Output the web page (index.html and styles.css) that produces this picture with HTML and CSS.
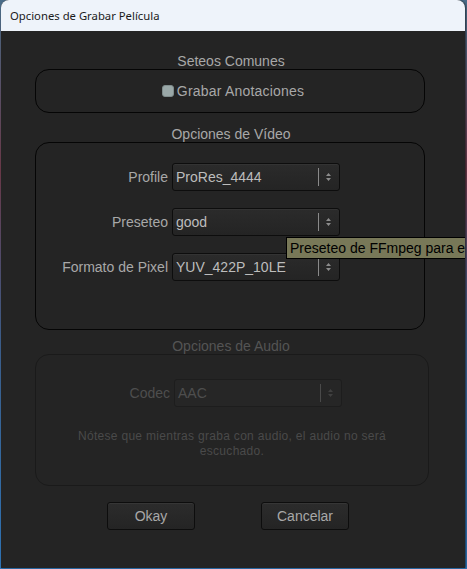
FILE: index.html
```html
<!DOCTYPE html>
<html>
<head>
<meta charset="utf-8">
<link rel="stylesheet" href="styles.css">
</head>
<body>
<div class="window">
  <div class="titlebar">Opciones de Grabar Película</div>
  <div class="content">
    <div class="group-title">Seteos Comunes</div>
    <div class="group g1">
      <label class="check"><span class="box"></span>Grabar Anotaciones</label>
    </div>

    <div class="group-title">Opciones de Vídeo</div>
    <div class="group g2">
      <div class="row">
        <span class="label">Profile</span>
        <div class="combo"><span class="val">ProRes_4444</span><span class="sep"></span><svg class="arrows" width="7" height="10" viewBox="0 0 7 10"><path d="M3.5 1 L6 4 H1 Z M3.5 9 L6 6 H1 Z" fill="currentColor"/></svg></div>
      </div>
      <div class="row">
        <span class="label">Preseteo</span>
        <div class="combo"><span class="val">good</span><span class="sep"></span><svg class="arrows" width="7" height="10" viewBox="0 0 7 10"><path d="M3.5 1 L6 4 H1 Z M3.5 9 L6 6 H1 Z" fill="currentColor"/></svg></div>
      </div>
      <div class="row">
        <span class="label">Formato de Pixel</span>
        <div class="combo"><span class="val">YUV_422P_10LE</span><span class="sep"></span><svg class="arrows" width="7" height="10" viewBox="0 0 7 10"><path d="M3.5 1 L6 4 H1 Z M3.5 9 L6 6 H1 Z" fill="currentColor"/></svg></div>
      </div>
    </div>

    <div class="group-title disabled">Opciones de Audio</div>
    <div class="group g3 disabled">
      <div class="row">
        <span class="label">Codec</span>
        <div class="combo"><span class="val">AAC</span><span class="sep"></span><svg class="arrows" width="7" height="10" viewBox="0 0 7 10"><path d="M3.5 1 L6 4 H1 Z M3.5 9 L6 6 H1 Z" fill="currentColor"/></svg></div>
      </div>
      <p class="note">Nótese que mientras graba con audio, el audio no será<br>escuchado.</p>
    </div>

    <div class="buttons">
      <button class="btn">Okay</button>
      <button class="btn">Cancelar</button>
    </div>

    <div class="tooltip">Preseteo de FFmpeg para e</div>
  </div>
</div>
</body>
</html>
```
FILE: styles.css
```css
html, body {
  margin: 0;
  padding: 0;
  width: 467px;
  height: 569px;
  overflow: hidden;
  background: linear-gradient(180deg, #4a6d8a 0%, #6b3a4a 30%, #3d5f8c 60%, #2f76b8 100%);
}
.window {
  margin-left: 1px;
  width: 464px;
  height: 568px;
  background: #242424;
  border-radius: 8px 8px 0 0;
  overflow: hidden;
  box-shadow: 1px 0 2px rgba(0,0,0,0.5);
  display: flex;
  flex-direction: column;
}
.titlebar {
  height: 31px;
  flex: none;
  background: #eef3fa;
  color: #1a1a1a;
  font-family: "Noto Sans", "Open Sans", sans-serif;
  font-size: 11.3px;
  line-height: 31px;
  padding-left: 9px;
  box-sizing: border-box;
}
.content {
  position: relative;
  flex: 1;
  padding: 22px 0 0 34px;
  font-family: "Liberation Sans", Arial, sans-serif;
  font-size: 14px;
  color: #a8a8a8;
}
.group-title {
  width: 392px;
  text-align: center;
  line-height: 16px;
  height: 16px;
}
.group-title.disabled { color: #545454; }
.group {
  box-sizing: border-box;
  border: 1px solid #050505;
  border-radius: 14px;
  width: 390px;
}
.g1 {
  height: 44px;
  display: flex;
  align-items: center;
  justify-content: center;
  margin-bottom: 13px;
  padding-left: 6px;
}
.check {
  display: flex;
  align-items: center;
  gap: 3px;
  color: #a8a8a8;
  letter-spacing: 0.2px;
}
.box {
  width: 12px;
  height: 12px;
  border-radius: 3px;
  background: #9aa8a8;
  border: 1px solid #7f8c8c;
  box-sizing: border-box;
}
.g2 {
  height: 188px;
  padding-top: 20px;
  margin-bottom: 8px;
}
.row {
  display: grid;
  grid-template-columns: 132px 168px;
  column-gap: 4px;
  align-items: center;
  margin-bottom: 17px;
}
.g2 .row:nth-child(3) { margin-top: 1px; }
.label {
  text-align: right;
}
.combo {
  height: 28px;
  box-sizing: border-box;
  border: 1px solid #0d0d0d;
  border-radius: 3px;
  background: linear-gradient(#2b2b2b, #242424);
  display: flex;
  align-items: center;
  color: #bdbdbd;
  box-shadow: inset 0 1px 0 #333;
}
.combo .val {
  flex: 1;
  padding-left: 3px;
}
.combo .sep {
  width: 1px;
  height: 18px;
  background: #8a8a8a;
  margin-right: 6px;
}
.combo .arrows {
  color: #8c8c8c;
  margin-right: 7px;
}
.g3 {
  width: 394px;
  height: 132px;
  border-color: #1a1a1a;
  padding-top: 24px;
}
.g3 .row {
  grid-template-columns: 134px 168px;
  margin-bottom: 0;
}
.disabled .label { color: #4e4e4e; }
.disabled .combo {
  color: #4e4e4e;
  border-color: #1d1d1d;
  background: #262626;
  box-shadow: none;
}
.disabled .combo .sep { background: #4a4a4a; }
.disabled .combo .arrows { color: #404040; }
.note {
  margin: 22px 0 0 0;
  text-align: center;
  font-size: 12px;
  line-height: 15px;
  letter-spacing: 0.3px;
  color: #4a4a4a;
}
.buttons {
  display: flex;
  gap: 66px;
  padding-left: 72px;
  margin-top: 16px;
}
.btn {
  width: 88px;
  height: 28px;
  box-sizing: border-box;
  border: 1px solid #0d0d0d;
  border-radius: 3px;
  background: linear-gradient(#2c2c2c, #242424);
  box-shadow: inset 0 1px 0 #363636;
  color: #a8a8a8;
  font-family: "Liberation Sans", Arial, sans-serif;
  font-size: 14px;
  padding: 0;
}
.tooltip {
  position: absolute;
  left: 285px;
  top: 206px;
  height: 22px;
  box-sizing: border-box;
  white-space: nowrap;
  padding: 0 3px;
  line-height: 20px;
  background: #787858;
  border: 1px solid #000;
  border-right: none;
  color: #000;
  font-size: 14px;
}
```
